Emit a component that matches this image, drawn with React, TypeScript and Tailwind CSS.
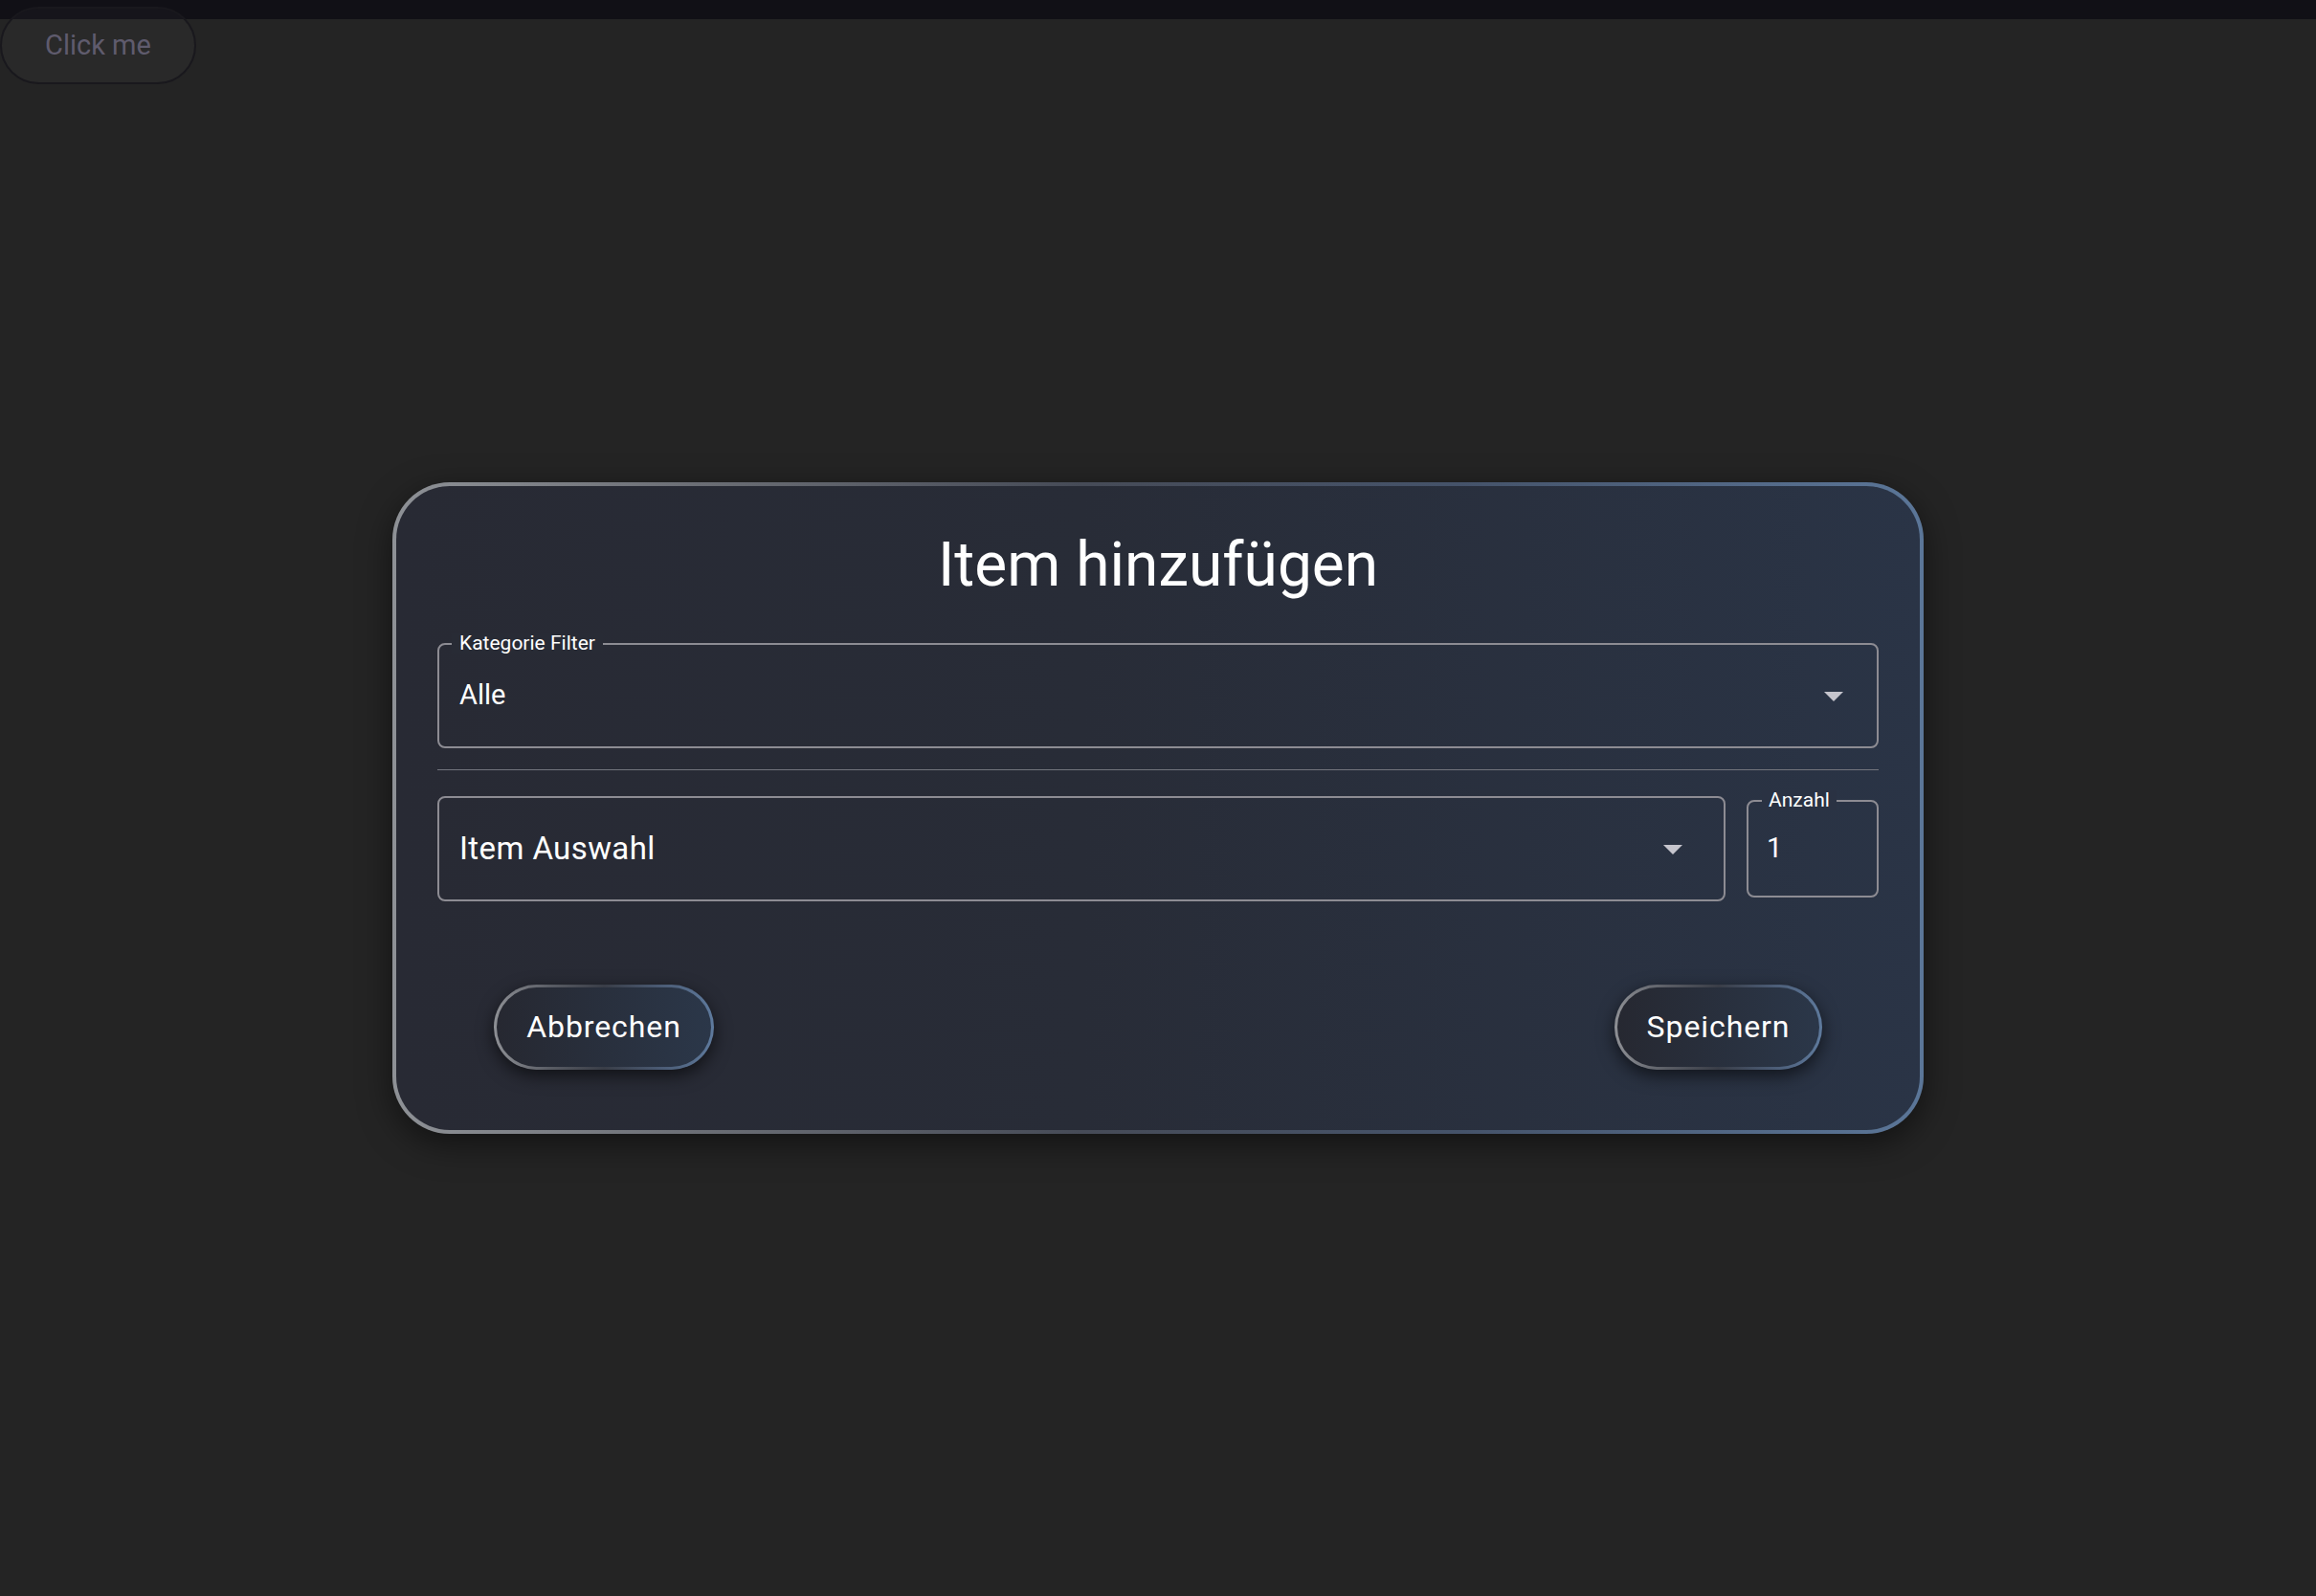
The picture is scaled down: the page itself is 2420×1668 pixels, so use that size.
import React from "react";

const ArrowDown: React.FC = () => (
  <svg viewBox="0 0 24 24" className="h-[48px] w-[48px] shrink-0 fill-[#c6c5cd]">
    <path d="M7 10l5 5 5-5z" />
  </svg>
);

type FieldProps = {
  label?: string;
  children: React.ReactNode;
  className?: string;
};

const OutlinedField: React.FC<FieldProps> = ({ label, children, className }) => {
  return (
    <div
      className={`relative flex items-center rounded-[8px] border-2 border-[#8d8c93] ${className ?? ""}`}
    >
      {label && (
        <span className="absolute -top-[12px] left-[13px] bg-[#282b35] px-[8px] text-[21px] leading-none text-white">
          {label}
        </span>
      )}
      {children}
    </div>
  );
};

const PillButton: React.FC<{ text: string; width: string }> = ({ text, width }) => (
  <button
    className={`h-[89px] ${width} rounded-full bg-[linear-gradient(90deg,#8e9095_0%,#5a5d65_25%,#393d47_50%,#4a5a73_75%,#5e7a9d_100%)] p-[3px] shadow-[0_6px_18px_rgba(0,0,0,0.6)]`}
  >
    <span className="flex h-full w-full items-center justify-center rounded-full bg-[linear-gradient(90deg,#262831,#2b3749)] text-[32px] tracking-[0.02857em] text-white">
      {text}
    </span>
  </button>
);

export default function App() {
  return (
    <div className="relative flex h-[1668px] flex-col bg-[#111016] font-['Roboto',sans-serif]">
      <div className="h-[20px] shrink-0" />
      <main className="flex flex-1 items-center justify-center bg-[#242424]">
        <div className="w-[1600px] rounded-[60px] bg-[linear-gradient(90deg,#8e9196_0%,#6b6e75_20%,#464b57_45%,#45536a_70%,#5b7698_100%)] p-[4px] shadow-[0_10px_34px_rgba(0,0,0,0.5)]">
          <div className="flex flex-col rounded-[56px] bg-[linear-gradient(90deg,#282a34_0%,#282c37_45%,#2a3446_100%)] px-[43px] pt-[43px] pb-[63px]">
            <h2 className="text-center text-[64px] leading-[79px] text-white">
              Item hinzufügen
            </h2>

            <OutlinedField label="Kategorie Filter" className="mt-[42px] h-[110px] pl-[21px] pr-[21px]">
              <span className="flex-1 text-[29px] text-white">Alle</span>
              <ArrowDown />
            </OutlinedField>

            <div className="mt-[22px] h-px bg-[#73757d]" />

            <div className="mt-[27px] flex items-center gap-[22px]">
              <OutlinedField className="h-[110px] flex-1 pl-[21px] pr-[29px]">
                <span className="flex-1 text-[33px] tracking-[0.012em] text-white">Item Auswahl</span>
                <ArrowDown />
              </OutlinedField>
              <div className="relative flex h-[102px] w-[138px] items-center rounded-[8px] border-2 border-[#8d8c93] pl-[19px]">
                <span className="absolute -top-[12px] left-[14px] bg-[#2a3243] px-[7px] text-[21px] leading-none text-white">
                  Anzahl
                </span>
                <span className="text-[29px] text-white">1</span>
              </div>
            </div>

            <div className="mt-[87px] flex items-center justify-between px-[59px]">
              <PillButton text="Abbrechen" width="w-[230px]" />
              <PillButton text="Speichern" width="w-[217px]" />
            </div>
          </div>
        </div>
      </main>

      <button className="absolute left-0 top-[7px] h-[81px] w-[205px] rounded-full border-2 border-[#19181d] bg-[rgba(255,255,255,0.025)] text-[29px] text-[#5f5b6d]">
        Click me
      </button>
    </div>
  );
}
